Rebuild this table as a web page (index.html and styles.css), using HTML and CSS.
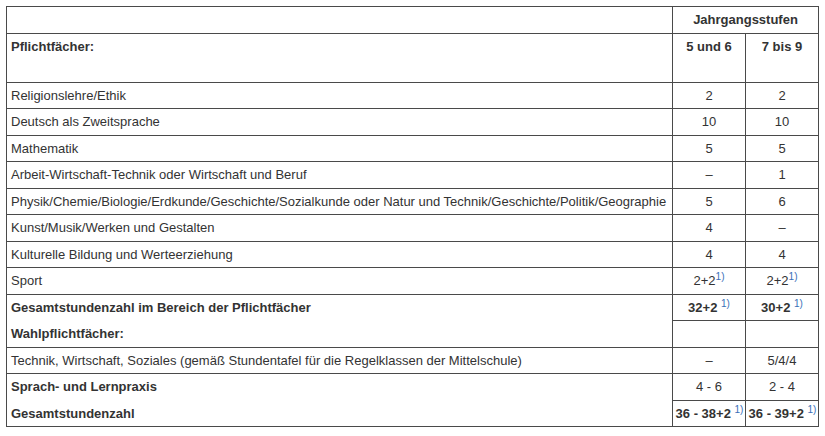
FILE: index.html
```html
<!DOCTYPE html>
<html lang="de">
<head>
<meta charset="utf-8">
<link rel="stylesheet" href="styles.css">
</head>
<body>
<table class="plan">
  <colgroup>
    <col class="c-subject">
    <col class="c-num">
    <col class="c-num">
  </colgroup>
  <tr class="row">
    <td></td>
    <td colspan="2" class="num head">Jahrgangsstufen</td>
  </tr>
  <tr class="row tall">
    <td class="head top">Pflichtfächer:</td>
    <td class="num head top">5 und 6</td>
    <td class="num head top">7 bis 9</td>
  </tr>
  <tr class="row"><td>Religionslehre/Ethik</td><td class="num">2</td><td class="num">2</td></tr>
  <tr class="row"><td>Deutsch als Zweitsprache</td><td class="num">10</td><td class="num">10</td></tr>
  <tr class="row"><td>Mathematik</td><td class="num">5</td><td class="num">5</td></tr>
  <tr class="row"><td>Arbeit-Wirtschaft-Technik oder Wirtschaft und Beruf</td><td class="num">–</td><td class="num">1</td></tr>
  <tr class="row"><td>Physik/Chemie/Biologie/Erdkunde/Geschichte/Sozialkunde oder Natur und Technik/Geschichte/Politik/Geographie</td><td class="num">5</td><td class="num">6</td></tr>
  <tr class="row"><td>Kunst/Musik/Werken und Gestalten</td><td class="num">4</td><td class="num">–</td></tr>
  <tr class="row"><td>Kulturelle Bildung und Werteerziehung</td><td class="num">4</td><td class="num">4</td></tr>
  <tr class="row"><td>Sport</td><td class="num">2+2<sup class="fn">1)</sup></td><td class="num">2+2<sup class="fn">1)</sup></td></tr>
  <tr class="row"><td class="head open-bottom">Gesamtstundenzahl im Bereich der Pflichtfächer</td><td class="num head">32+2 <sup class="fn">1)</sup></td><td class="num head">30+2 <sup class="fn">1)</sup></td></tr>
  <tr class="row"><td class="head open-top">Wahlpflichtfächer:</td><td class="num"></td><td class="num"></td></tr>
  <tr class="row"><td>Technik, Wirtschaft, Soziales (gemäß Stundentafel für die Regelklassen der Mittelschule)</td><td class="num">–</td><td class="num">5/4/4</td></tr>
  <tr class="row"><td class="head open-bottom">Sprach- und Lernpraxis</td><td class="num">4 - 6</td><td class="num">2 - 4</td></tr>
  <tr class="row"><td class="head open-top">Gesamtstundenzahl</td><td class="num head tight">36 - 38+2 <sup class="fn">1)</sup></td><td class="num head tight">36 - 39+2 <sup class="fn">1)</sup></td></tr>
</table>
</body>
</html>
```

FILE: styles.css
```css
html, body {
  background: #ffffff;
}
body {
  margin: 6px;
  font-family: "Liberation Sans", Arial, sans-serif;
  font-size: 13px;
  color: #333333;
}
.plan {
  border-collapse: collapse;
  width: 813px;
  table-layout: fixed;
}
.c-subject { width: 666px; }
.c-num { width: 73px; }
.plan td {
  border: 1px solid #4a4a4a;
  padding: 5px 4px;
  line-height: 15.5px;
  height: 15.5px;
  vertical-align: middle;
  white-space: nowrap;
  overflow: visible;
}
.plan .tall td {
  height: 38px;
}
.plan td.top {
  vertical-align: top;
}
.plan td.num {
  text-align: center;
}
.plan td.tight {
  padding-left: 2px;
  padding-right: 1px;
}
.plan td.head {
  font-weight: bold;
}
.plan td.open-bottom {
  border-bottom-color: transparent;
}
.plan td.open-top {
  border-top-color: transparent;
}
.fn {
  font-size: 10px;
  font-weight: normal;
  color: #3a6fb8;
  line-height: 0;
  vertical-align: 5px;
}
```
